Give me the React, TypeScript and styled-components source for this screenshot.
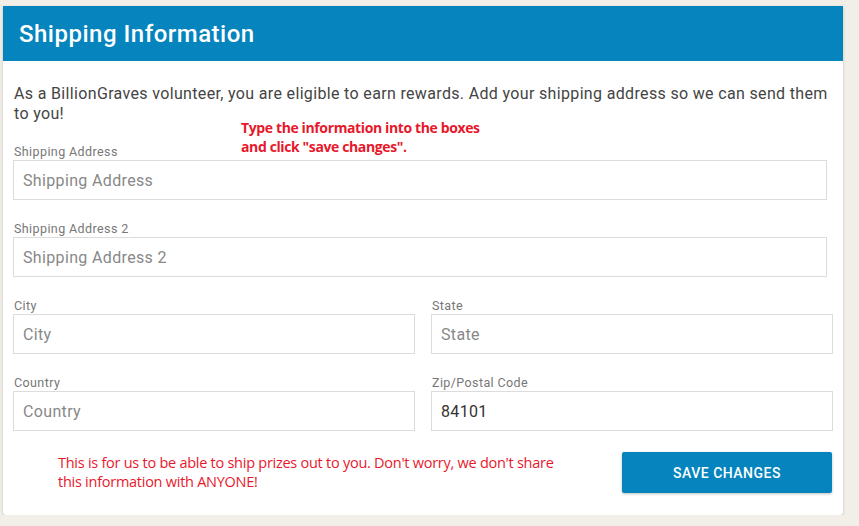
import * as React from 'react'
import styled, { createGlobalStyle } from 'styled-components'

const GlobalStyle = createGlobalStyle`
  html, body {
    margin: 0;
    padding: 0;
    background: #f2efe9;
    font-family: Roboto, 'Liberation Sans', sans-serif;
  }
`

const Page = styled.div`
  padding: 6px 16px 0 3px;
  width: 840px;
`

const Card = styled.div`
  position: relative;
  background: #fff;
  border-radius: 0 0 3px 3px;
  box-shadow: 0 1px 3px rgba(0, 0, 0, 0.22);
`

const Header = styled.div`
  height: 55px;
  background: #0584bd;
  display: flex;
  align-items: center;
  padding-left: 16px;
`

const Title = styled.h2`
  margin: 0;
  color: #fff;
  font-size: 24px;
  font-weight: 500;
  letter-spacing: 0.5px;
`

const Body = styled.div`
  padding: 23px 10px 22px 10px;
`

const Intro = styled.p`
  margin: 0 0 20px 1px;
  font-size: 16px;
  line-height: 20px;
  letter-spacing: 0.34px;
  color: #444;
`

const Note = styled.div<{ bold?: boolean }>`
  color: #e8182c;
  font-family: 'Open Sans', 'Noto Sans', sans-serif;
  font-size: ${({ bold }) => (bold ? '14px' : '14.5px')};
  font-weight: ${({ bold }) => (bold ? 700 : 400)};
  line-height: 19px;
  letter-spacing: ${({ bold }) => (bold ? '-0.38px' : '-0.26px')};
`

const Annotation = styled(Note)`
  position: absolute;
  left: 238px;
  top: 112px;
`

const Fields = styled.div`
  display: grid;
  grid-template-columns: 1fr 1fr;
  column-gap: 16px;
  row-gap: 21px;
`

const Field = styled.label<{ wide?: boolean }>`
  display: flex;
  flex-direction: column;
  grid-column: ${({ wide }) => (wide ? '1 / span 2' : 'auto')};
  margin-right: ${({ wide }) => (wide ? '6px' : '0')};
`

const Label = styled.span`
  font-size: 12.5px;
  line-height: 16px;
  letter-spacing: 0.4px;
  color: #777;
  padding-left: 1px;
`

const Input = styled.input`
  box-sizing: border-box;
  height: 40px;
  width: 100%;
  border: 1px solid #dcdcdc;
  border-radius: 0;
  padding: 0 9px;
  font-family: Roboto, 'Liberation Sans', sans-serif;
  font-size: 16px;
  letter-spacing: 0.35px;
  color: #333;
  outline: none;

  &::placeholder {
    color: #888;
  }
`

const Footer = styled.div`
  display: flex;
  align-items: flex-start;
  justify-content: space-between;
  margin-top: 21px;
`

const FooterNote = styled(Note)`
  margin: 0 0 0 45px;
  padding-top: 1px;
  width: 520px;
`

const SaveButton = styled.button`
  width: 210px;
  height: 41px;
  margin-right: 1px;
  border: none;
  border-radius: 2px;
  background: #0584bd;
  color: #fff;
  font-family: Roboto, 'Liberation Sans', sans-serif;
  font-size: 14px;
  font-weight: 500;
  letter-spacing: 0.5px;
  box-shadow: 0 1px 3px rgba(0, 0, 0, 0.25);
  cursor: pointer;
`

type FieldDef = {
  label: string
  placeholder: string
  value?: string
  wide?: boolean
}

const fields: FieldDef[] = [
  { label: 'Shipping Address', placeholder: 'Shipping Address', wide: true },
  { label: 'Shipping Address 2', placeholder: 'Shipping Address 2', wide: true },
  { label: 'City', placeholder: 'City' },
  { label: 'State', placeholder: 'State' },
  { label: 'Country', placeholder: 'Country' },
  { label: 'Zip/Postal Code', placeholder: 'Zip/Postal Code', value: '84101' },
]

const App = () => {
  return (
    <Page>
      <GlobalStyle />
      <Card>
        <Header>
          <Title>Shipping Information</Title>
        </Header>

        <Body>
          <Intro>
            As a BillionGraves volunteer, you are eligible to earn rewards. Add your shipping
            address so we can send them to you!
          </Intro>

          <Fields>
            {fields.map((f) => (
              <Field key={f.label} wide={f.wide}>
                <Label>{f.label}</Label>
                <Input placeholder={f.placeholder} defaultValue={f.value} />
              </Field>
            ))}
          </Fields>

          <Footer>
            <FooterNote>
              This is for us to be able to ship prizes out to you. Don't worry, we don't share
              this information with ANYONE!
            </FooterNote>
            <SaveButton>SAVE CHANGES</SaveButton>
          </Footer>
        </Body>

        <Annotation bold>
          Type the information into the boxes
          <br />
          and click "save changes".
        </Annotation>
      </Card>
    </Page>
  )
}

export default App
